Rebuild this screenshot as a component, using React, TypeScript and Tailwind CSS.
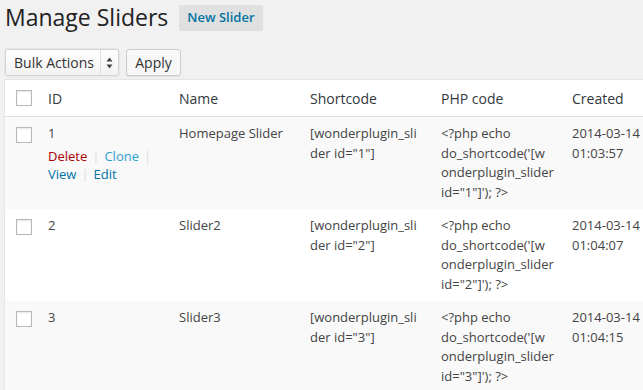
const sliders = [
  { id: '1', name: 'Homepage Slider', time: '01:03:57', actions: true },
  { id: '2', name: 'Slider2', time: '01:04:07', actions: false },
  { id: '3', name: 'Slider3', time: '01:04:15', actions: false },
]

function Checkbox({ className = '' }: { className?: string }) {
  return (
    <span
      className={`block h-4 w-4 border border-[#b4b9be] bg-white shadow-[inset_0_1px_2px_rgba(0,0,0,0.1)] ${className}`}
    />
  )
}

function Sep({ trailing = false }: { trailing?: boolean }) {
  return <span className={`text-[#ddd] ${trailing ? 'ml-[5px]' : 'mx-[5px]'}`}>|</span>
}

export default function App() {
  return (
    <div className="h-screen overflow-hidden bg-[#f1f1f1] font-['Open_Sans',sans-serif] text-[13px] text-[#444]">
      <div className="pl-[4px]">
        <div className="flex items-center pt-[2px] pl-[1px]">
          <h1 className="text-[23px] leading-[31px] font-normal text-[#222]">Manage Sliders</h1>
          <button className="ml-[11px] h-[26px] rounded-[2px] bg-[#e0e0e0] px-[8px] text-[13px] font-semibold text-[#0074a2]">
            New Slider
          </button>
        </div>

        <div className="mt-[16px] flex items-center pl-[1px]">
          <div className="flex h-[27px] w-[114px] items-stretch rounded-[3px] border border-[#d4d4d4] bg-gradient-to-b from-white to-[#f2f2f2] shadow-[0_0_2px_rgba(0,0,0,0.15)]">
            <span className="flex flex-1 items-center pl-[8px] text-[14px] text-[#333]">Bulk Actions</span>
            <span className="flex w-[18px] items-center justify-center border-l border-[#ddd]">
              <svg width="7" height="12" viewBox="0 0 7 12" fill="#444">
                <path d="M3.5 0.5 L6.5 4.5 L0.5 4.5 Z" />
                <path d="M3.5 11.5 L6.5 7.5 L0.5 7.5 Z" />
              </svg>
            </span>
          </div>
          <button className="ml-[7px] h-[27px] w-[55px] rounded-[3px] border border-[#ccc] bg-[#f7f7f7] text-[14px] text-[#333] shadow-[0_1px_0_rgba(0,0,0,0.06)]">
            Apply
          </button>
        </div>

        <div className="mt-[3px] w-[700px] border-l border-t border-[#e5e5e5] bg-white">
          <div className="flex h-[37px] items-center border-b border-[#e1e1e1] text-[14px] text-[#32373c]">
            <div className="w-[33px] pl-[11px]">
              <Checkbox />
            </div>
            <div className="w-[131px] pl-[10px]">ID</div>
            <div className="w-[131px] pl-[10px]">Name</div>
            <div className="w-[131px] pl-[10px]">Shortcode</div>
            <div className="w-[131px] pl-[10px]">PHP code</div>
            <div className="w-[131px] pl-[10px]">Created</div>
          </div>

          {sliders.map((s, i) => (
            <div
              key={s.id}
              className={`flex h-[92px] leading-[19.5px] ${i % 2 === 0 ? 'bg-[#f9f9f9]' : 'bg-white'}`}
            >
              <div className="w-[33px] pl-[11px] pt-[10px]">
                <Checkbox />
              </div>
              <div className="w-[131px] pl-[10px] pt-[7px]">
                <div>{s.id}</div>
                {s.actions && (
                  <div className="pt-[3px] leading-[18.5px]">
                    <div>
                      <span className="text-[#a00]">Delete</span>
                      <Sep />
                      <span className="text-[#2ea2cc]">Clone</span>
                      <Sep trailing />
                    </div>
                    <div>
                      <span className="text-[#0074a2]">View</span>
                      <Sep />
                      <span className="text-[#0074a2]">Edit</span>
                    </div>
                  </div>
                )}
              </div>
              <div className="w-[131px] pl-[10px] pt-[7px]">{s.name}</div>
              <div className="w-[131px] pl-[10px] pt-[7px]">
                [wonderplugin_sli
                <br />
                der id="{s.id}"]
              </div>
              <div className="w-[131px] pl-[10px] pt-[7px]">
                &lt;?php echo
                <br />
                do_shortcode('[w
                <br />
                onderplugin_slider
                <br />
                id="{s.id}"]'); ?&gt;
              </div>
              <div className="w-[131px] pl-[10px] pt-[7px]">
                2014-03-14
                <br />
                {s.time}
              </div>
            </div>
          ))}
        </div>
      </div>
    </div>
  )
}
